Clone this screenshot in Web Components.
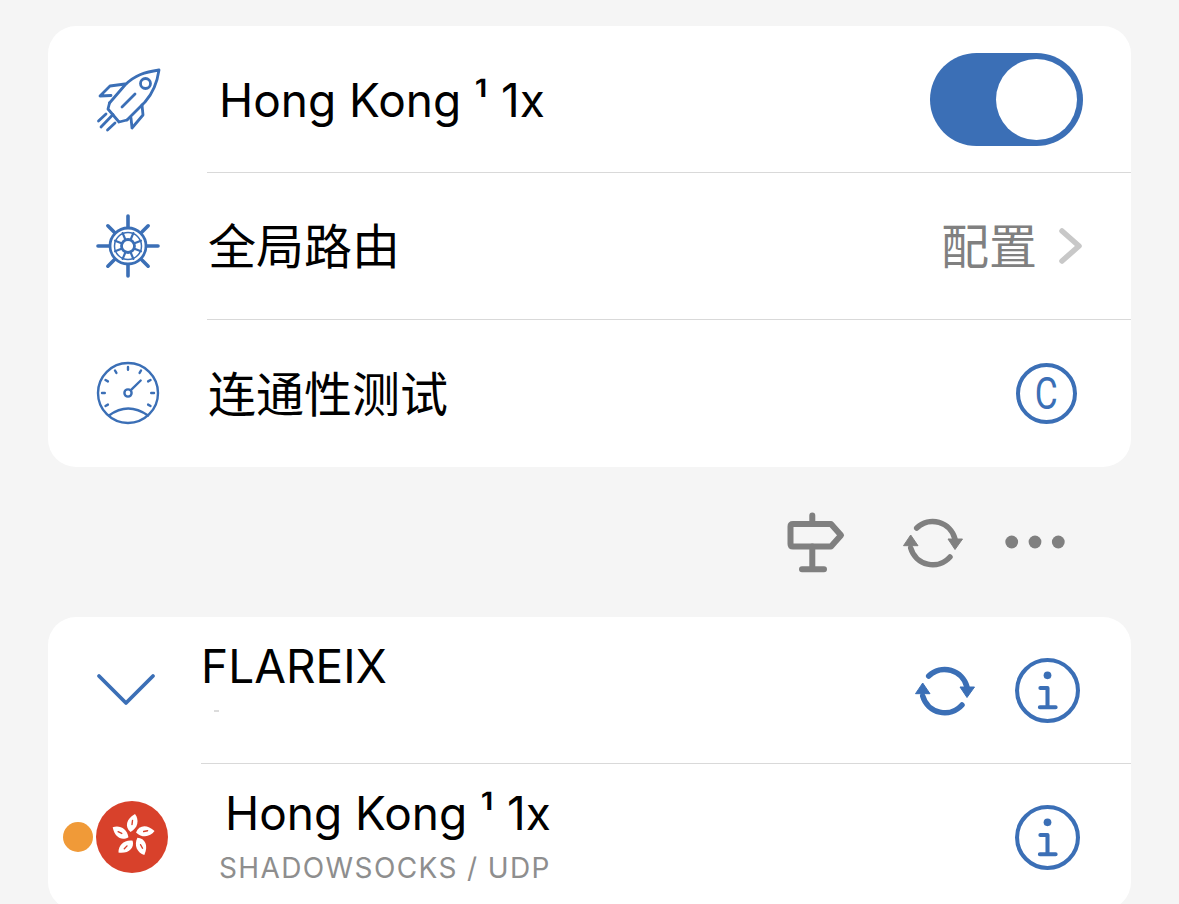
<!doctype html>
<html>
<head>
<meta charset="utf-8">
<style>
  html, body { margin: 0; height: 904px; overflow: hidden; background: #f5f5f5; }
  body {
    padding: 26px 48px 0;
    box-sizing: border-box;
    font-family: Inter, "Noto Sans CJK SC", sans-serif;
    color: #000;
  }
</style>
</head>
<body>
  <ui-card>
    <ui-row>
      <ui-icon slot="lead" name="rocket" style="margin:-3px 2px 0 0"></ui-icon>
      <span style="margin-left:11px;font-size:46px">Hong Kong ¹ 1x</span>
      <ui-toggle slot="end"></ui-toggle>
    </ui-row>
    <ui-divider inset="159"></ui-divider>
    <ui-row>
      <ui-icon slot="lead" name="helm"></ui-icon>
      全局路由
      <span slot="end" style="display:flex;align-items:center;color:#808080;padding-top:2px">配置<ui-icon name="chevron" style="margin:-2px 3px 0 23px"></ui-icon></span>
    </ui-row>
    <ui-divider inset="159"></ui-divider>
    <ui-row style="--row-h:147px">
      <ui-icon slot="lead" name="gauge" style="margin-top:-2px"></ui-icon>
      连通性测试
      <ui-copy slot="end" style="margin-right:6px"></ui-copy>
    </ui-row>
  </ui-card>

  <ui-toolbar>
    <ui-icon name="sign"></ui-icon>
    <ui-icon name="sync" style="color:#808080;margin-left:57px"></ui-icon>
    <ui-icon name="dots" style="margin-left:42px"></ui-icon>
  </ui-toolbar>

  <ui-card>
    <ui-row style="--lead-w:155px">
      <ui-icon slot="lead" name="down"></ui-icon>
      <ui-stack title="FLAREIX"></ui-stack>
      <span slot="end" style="display:flex;align-items:center;margin-right:3px">
        <ui-icon name="sync" style="margin-right:40px"></ui-icon>
        <ui-icon name="info"></ui-icon>
      </span>
    </ui-row>
    <ui-divider inset="153"></ui-divider>
    <ui-row style="--lead-w:172px">
      <ui-ping slot="lead"></ui-ping>
      <ui-stack title="Hong Kong ¹ 1x" sub="SHADOWSOCKS / UDP"></ui-stack>
      <ui-icon slot="end" name="info" style="margin-right:3px"></ui-icon>
    </ui-row>
  </ui-card>

<script>
const BLUE = "#3b6fb6";

class UiCard extends HTMLElement {
  constructor() {
    super();
    this.attachShadow({ mode: "open" });
    this.shadowRoot.innerHTML = `
      <style>
        :host { display: block; background: #fff; border-radius: 28px; overflow: hidden; }
      </style>
      <slot></slot>
    `;
  }
}

class UiRow extends HTMLElement {
  constructor() {
    super();
    this.attachShadow({ mode: "open" });
    this.shadowRoot.innerHTML = `
      <style>
        :host {
          display: flex;
          align-items: center;
          height: var(--row-h, 146px);
          padding-right: 48px;
          font-size: 48px;
          line-height: 1;
        }
        .lead {
          flex: none;
          width: var(--lead-w, 160px);
          display: flex;
          justify-content: center;
        }
        .main { flex: 1; min-width: 0; white-space: nowrap; padding-top: 2px; }
        .end { flex: none; display: flex; align-items: center; }
      </style>
      <div class="lead"><slot name="lead"></slot></div>
      <div class="main"><slot></slot></div>
      <div class="end"><slot name="end"></slot></div>
    `;
  }
}

class UiDivider extends HTMLElement {
  constructor() {
    super();
    this.attachShadow({ mode: "open" });
    this.shadowRoot.innerHTML = `
      <style>
        :host { display: block; height: 1px; background: #d9d9d9; }
      </style>
    `;
  }
  connectedCallback() {
    this.style.marginLeft = this.getAttribute("inset") + "px";
  }
}

class UiToggle extends HTMLElement {
  constructor() {
    super();
    this.attachShadow({ mode: "open" });
    this.shadowRoot.innerHTML = `
      <style>
        :host {
          display: flex;
          justify-content: flex-end;
          box-sizing: border-box;
          width: 153px;
          height: 93px;
          padding: 6px;
          border-radius: 47px;
          background: ${BLUE};
        }
        .thumb { width: 81px; height: 81px; border-radius: 50%; background: #fff; }
      </style>
      <div class="thumb"></div>
    `;
  }
}

class UiCopy extends HTMLElement {
  constructor() {
    super();
    this.attachShadow({ mode: "open" });
    this.shadowRoot.innerHTML = `
      <style>
        :host {
          display: flex;
          align-items: center;
          justify-content: center;
          box-sizing: border-box;
          width: 61px;
          height: 61px;
          border: 4.5px solid ${BLUE};
          border-radius: 50%;
          color: ${BLUE};
          font: 400 44px/1 Roboto, sans-serif;
        }
        span { display: inline-block; transform: scaleX(.8); }
      </style>
      <span>C</span>
    `;
  }
}

class UiToolbar extends HTMLElement {
  constructor() {
    super();
    this.attachShadow({ mode: "open" });
    this.shadowRoot.innerHTML = `
      <style>
        :host {
          display: flex;
          align-items: center;
          justify-content: flex-end;
          height: 150px;
          padding-right: 66px;
          color: #808080;
        }
      </style>
      <slot></slot>
    `;
  }
}

class UiStack extends HTMLElement {
  constructor() {
    super();
    this.attachShadow({ mode: "open" });
    this.shadowRoot.innerHTML = `
      <style>
        :host { display: flex; flex-direction: column; margin: -2px 0 0 -2px; }
        .title { font-size: 46px; line-height: 56px; }
        .sub {
          font-size: 28px;
          line-height: 34px;
          letter-spacing: 1.38px;
          color: #8e8e8e;
          margin-left: 1px;
        }
        .speck { width: 5px; height: 2px; margin: 16px 0 30px 13px; background: #dcdcdc; }
        :host([sub]) { padding-bottom: 4px; }
        :host([sub]) .title { margin-left: 7px; margin-bottom: 10px; }
      </style>
      <div class="title"></div>
    `;
  }
  connectedCallback() {
    this.shadowRoot.querySelector(".title").textContent = this.getAttribute("title");
    let sub = this.getAttribute("sub");
    let el = document.createElement("div");
    if (sub) {
      el.className = "sub";
      el.textContent = sub;
    } else {
      el.className = "speck";
    }
    this.shadowRoot.appendChild(el);
  }
}

class UiPing extends HTMLElement {
  constructor() {
    super();
    this.attachShadow({ mode: "open" });
    let petal = "M-2.5 -4C-8.5 -9 -7 -17 2 -22C6.5 -16 5 -8 -2.5 -4Z";
    let petals = [0, 72, 144, 216, 288].map((a) => `
      <g transform="rotate(${a})">
        <path d="${petal}" fill="#fff"/>
        <path d="M-.5 -15.5L-1 -11.5" stroke="#d8412b" stroke-width="1.4" stroke-linecap="round"/>
      </g>`).join("");
    this.shadowRoot.innerHTML = `
      <style>
        :host { display: flex; align-items: center; width: 172px; box-sizing: border-box; padding-left: 15px; }
        .dot { width: 30px; height: 30px; border-radius: 50%; background: #f09a38; margin-right: 3px; }
        .flag { width: 72px; height: 72px; border-radius: 50%; background: #d8412b; }
        svg { display: block; }
      </style>
      <div class="dot"></div>
      <div class="flag">
        <svg width="72" height="72" viewBox="-36 -36 72 72"><g transform="translate(1 -1)">${petals}</g></svg>
      </div>
    `;
  }
}

// sizes are in page pixels, shapes measured off the screenshot
const ticks = [-120, -90, -60, -30, 0, 30, 60, 90, 120]
  .map((a) => `<path d="M32 6V8.8" transform="rotate(${a} 32 32)"/>`).join("");
const arms = [0, 45, 90, 135, 180, 225, 270, 315]
  .map((a) => `<path d="M32 13V${a % 90 ? 3.5 : 2}" stroke-width="3.6" transform="rotate(${a} 32 32)"/>`).join("");
const spokes = [22.5, 67.5, 112.5, 157.5, 202.5, 247.5, 292.5, 337.5]
  .map((a) => `<path d="M32 25V18" stroke-width="2.2" transform="rotate(${a} 32 32)"/>`).join("");
const syncPaths = (w) => `
  <path d="M13.7 16A23 23 0 0 1 52 27M47 45A23 23 0 0 1 7.7 36" fill="none" stroke="currentColor" stroke-width="${w}" stroke-linecap="round"/>
  <path d="M45 27H59.5L52 37.5ZM.5 33.7H15L7.7 23Z" fill="currentColor" stroke="currentColor" stroke-width="1" stroke-linejoin="round"/>`;

const ICONS = {
  rocket: { w: 66, h: 66, box: "14 14 66 66", sw: 2.8, color: BLUE, body: `
    <path d="M29.5 52L45 34C55 24 65 21 79 19C77 33 73 42 65 51L47 69"/>
    <path d="M45 33L30 35L20 45L31 44.5"/>
    <path d="M62 54L63 64L52 77L51 67"/>
    <path d="M29.5 52L28 58L39 71L47 69"/>
    <circle cx="65.5" cy="32.5" r="5"/>
    <path d="M42 56L55 43"/>
    <path d="M18.5 70L26 63M21 76L33 63.5M27.5 79L35 72"/>` },
  helm: { w: 64, h: 64, box: "0 0 64 64", sw: 2.8, color: BLUE, body: `
    ${arms}${spokes}
    <circle cx="32" cy="32" r="18"/>
    <circle cx="32" cy="32" r="13.5" stroke-width="1.5"/>
    <circle cx="32" cy="32" r="6.5"/>` },
  gauge: { w: 64, h: 64, box: "0 0 64 64", sw: 2.4, color: BLUE, body: `
    <circle cx="32" cy="32" r="30"/>
    ${ticks}
    <circle cx="32" cy="32" r="3.6"/>
    <path d="M34.6 29.4L44.7 19.5"/>
    <path d="M13 54.5Q32 40.5 52 54.5"/>` },
  chevron: { w: 20, h: 34, box: "0 0 20 34", sw: 5.5, color: "#c8c8c8", body: `<path d="M2 2L19 17L2 32"/>` },
  down: { w: 58, h: 32, box: "0 0 58 32", sw: 3.8, color: BLUE, body: `<path d="M2 2L29 29L56 2"/>` },
  info: { w: 65, h: 65, box: "0 0 64 64", sw: 4, color: BLUE, body: `
    <circle cx="32" cy="32" r="30"/>
    <circle cx="32" cy="17" r="3.8" fill="currentColor" stroke="none"/>
    <path d="M25 29.5H32V48.5M24.5 48.5H40"/>` },
  sign: { w: 60, h: 62, box: "0 0 60 62", sw: 6, color: "#808080", body: `
    <path d="M7 13H45L55 24.3L45 35.5H7Q4.5 35.5 4.5 33V15.5Q4.5 13 7 13Z"/>
    <path d="M26.3 4.5V13M26.3 35.5V58.3M16 58.3H38"/>` },
  sync: { w: 60, h: 60, box: "0 0 60 60", color: BLUE, raw: syncPaths(5.5) },
  dots: { w: 60, h: 14, box: "0 0 60 14", color: "#808080", raw: `
    <circle cx="6.7" cy="7" r="6.4" fill="currentColor"/>
    <circle cx="30" cy="7" r="6.4" fill="currentColor"/>
    <circle cx="53.3" cy="7" r="6.4" fill="currentColor"/>` },
};

class UiIcon extends HTMLElement {
  constructor() {
    super();
    this.attachShadow({ mode: "open" });
  }
  connectedCallback() {
    let icon = ICONS[this.getAttribute("name")];
    let inner = icon.raw || `<g fill="none" stroke="currentColor" stroke-width="${icon.sw}" stroke-linecap="round" stroke-linejoin="round">${icon.body}</g>`;
    this.shadowRoot.innerHTML = `
      <style>
        :host { display: block; flex: none; width: ${icon.w}px; height: ${icon.h}px; color: ${icon.color}; }
        svg { display: block; overflow: visible; }
      </style>
      <svg width="${icon.w}" height="${icon.h}" viewBox="${icon.box}">${inner}</svg>
    `;
  }
}

customElements.define("ui-card", UiCard);
customElements.define("ui-row", UiRow);
customElements.define("ui-divider", UiDivider);
customElements.define("ui-toggle", UiToggle);
customElements.define("ui-copy", UiCopy);
customElements.define("ui-toolbar", UiToolbar);
customElements.define("ui-stack", UiStack);
customElements.define("ui-ping", UiPing);
customElements.define("ui-icon", UiIcon);
</script>
</body>
</html>
